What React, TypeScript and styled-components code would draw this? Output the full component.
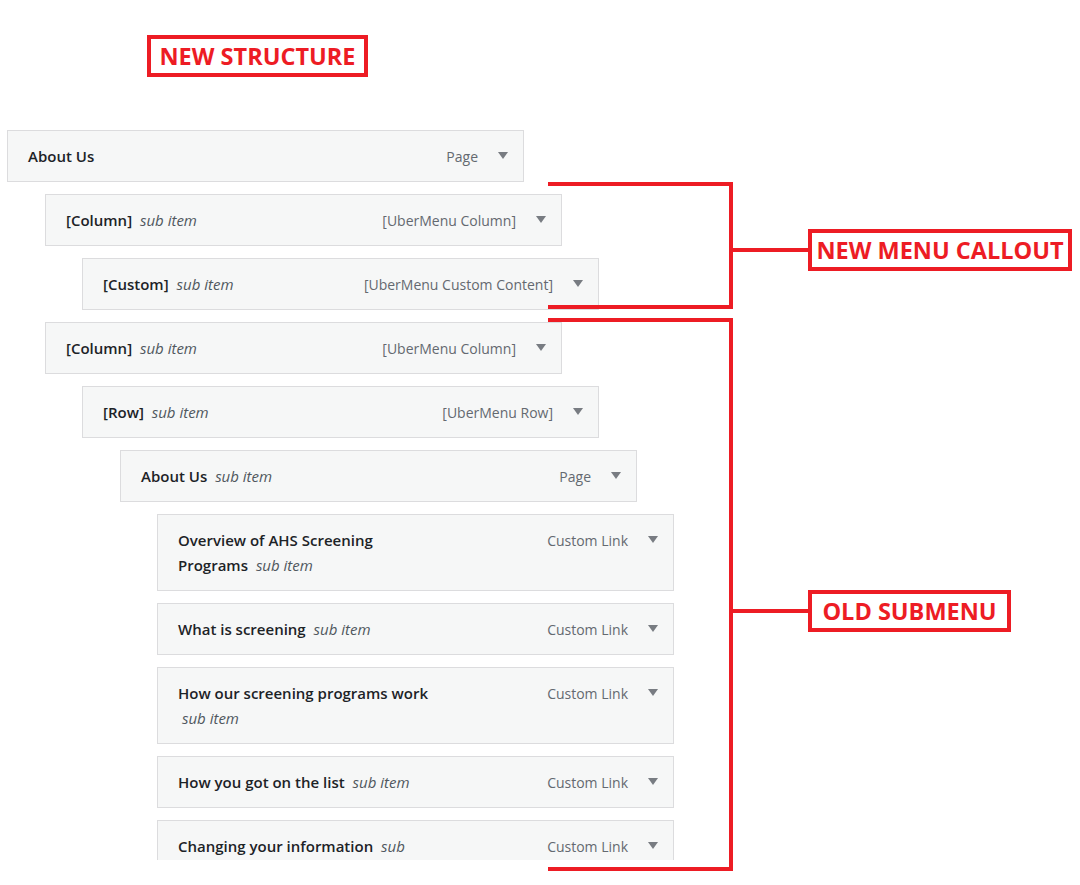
import React from 'react';
import styled, { createGlobalStyle } from 'styled-components';

const red = '#ed1c24';

type MenuItemData = {
  title: string;
  depth: number;
  type: string;
  sub?: boolean;
};

const items: MenuItemData[] = [
  { title: 'About Us', depth: 0, type: 'Page' },
  { title: '[Column]', depth: 1, type: '[UberMenu Column]', sub: true },
  { title: '[Custom]', depth: 2, type: '[UberMenu Custom Content]', sub: true },
  { title: '[Column]', depth: 1, type: '[UberMenu Column]', sub: true },
  { title: '[Row]', depth: 2, type: '[UberMenu Row]', sub: true },
  { title: 'About Us', depth: 3, type: 'Page', sub: true },
  { title: 'Overview of AHS Screening Programs', depth: 4, type: 'Custom Link', sub: true },
  { title: 'What is screening', depth: 4, type: 'Custom Link', sub: true },
  { title: 'How our screening programs work', depth: 4, type: 'Custom Link', sub: true },
  { title: 'How you got on the list', depth: 4, type: 'Custom Link', sub: true },
  { title: 'Changing your information', depth: 4, type: 'Custom Link', sub: true },
];

export default function App() {
  return (
    <>
      <GlobalStyle />
      <Page>
        <Header>
          <Label $width={221}>NEW STRUCTURE</Label>
        </Header>
        <MenuList>
          {items.map((item, i) => (
            <Item key={i} $depth={item.depth}>
              <Title>
                {item.title}
                {item.sub && (
                  <>
                    {' '}
                    <Sub>sub item</Sub>
                  </>
                )}
              </Title>
              <Meta>
                <TypeName>{item.type}</TypeName>
                <Arrow />
              </Meta>
            </Item>
          ))}
        </MenuList>

        <Annotation $top={182}>
          <Bracket $height={127} />
          <Callout $offset={47}>
            <Tick />
            <Label $width={264}>NEW MENU CALLOUT</Label>
          </Callout>
        </Annotation>

        <Annotation $top={318}>
          <Bracket $height={553} />
          <Callout $offset={272}>
            <Tick />
            <Label $width={203}>OLD SUBMENU</Label>
          </Callout>
        </Annotation>
      </Page>
    </>
  );
}

const GlobalStyle = createGlobalStyle`
  body {
    margin: 0;
    background: #fff;
    font-family: "Open Sans", "Noto Sans", sans-serif;
  }
`;

const Page = styled.div`
  position: relative;
  width: 1080px;
  height: 885px;
  overflow: hidden;
  padding-top: 35px;
  box-sizing: border-box;
`;

const Header = styled.div`
  display: flex;
  padding-left: 147px;
  margin-bottom: 53px;
`;

const Label = styled.div<{ $width: number }>`
  box-sizing: border-box;
  width: ${(p) => p.$width}px;
  height: 42px;
  border: 4px solid ${red};
  display: flex;
  align-items: center;
  justify-content: center;
  color: ${red};
  font-size: 23.5px;
  font-weight: 700;
  background: #fff;
  white-space: nowrap;
`;

const MenuList = styled.div`
  display: flex;
  flex-direction: column;
  gap: 12px;
  padding-left: 7px;
  height: 730px;
  overflow: hidden;
`;

const Item = styled.div<{ $depth: number }>`
  flex: none;
  display: flex;
  align-items: flex-start;
  box-sizing: border-box;
  width: 517px;
  margin-left: ${(p) => Math.round(p.$depth * 37.5)}px;
  padding: 13px 15px 12px 20px;
  background: #f6f7f7;
  border: 1px solid #dcdcde;
  font-size: 14px;
  line-height: 25px;
`;

const Title = styled.div`
  flex: 0 1 252px;
  color: #1d2327;
  font-size: 15px;
  font-weight: 600;
`;

const Sub = styled.span`
  margin-left: 4px;
  color: #50575e;
  font-weight: 400;
  font-style: italic;
`;

const Meta = styled.div`
  margin-left: auto;
  display: flex;
  align-items: center;
  gap: 20px;
  height: 25px;
`;

const TypeName = styled.span`
  color: #646970;
  white-space: nowrap;
`;

const Arrow = styled.span`
  width: 0;
  height: 0;
  margin-top: -2px;
  border-left: 5px solid transparent;
  border-right: 5px solid transparent;
  border-top: 7px solid #787c82;
`;

const Annotation = styled.div<{ $top: number }>`
  position: absolute;
  left: 548px;
  top: ${(p) => p.$top}px;
  display: flex;
  align-items: flex-start;
`;

const Bracket = styled.div<{ $height: number }>`
  box-sizing: border-box;
  width: 185px;
  height: ${(p) => p.$height}px;
  border: 4px solid ${red};
  border-left: none;
`;

const Callout = styled.div<{ $offset: number }>`
  display: flex;
  align-items: center;
  margin-top: ${(p) => p.$offset}px;
`;

const Tick = styled.div`
  width: 75px;
  height: 4px;
  background: ${red};
`;
